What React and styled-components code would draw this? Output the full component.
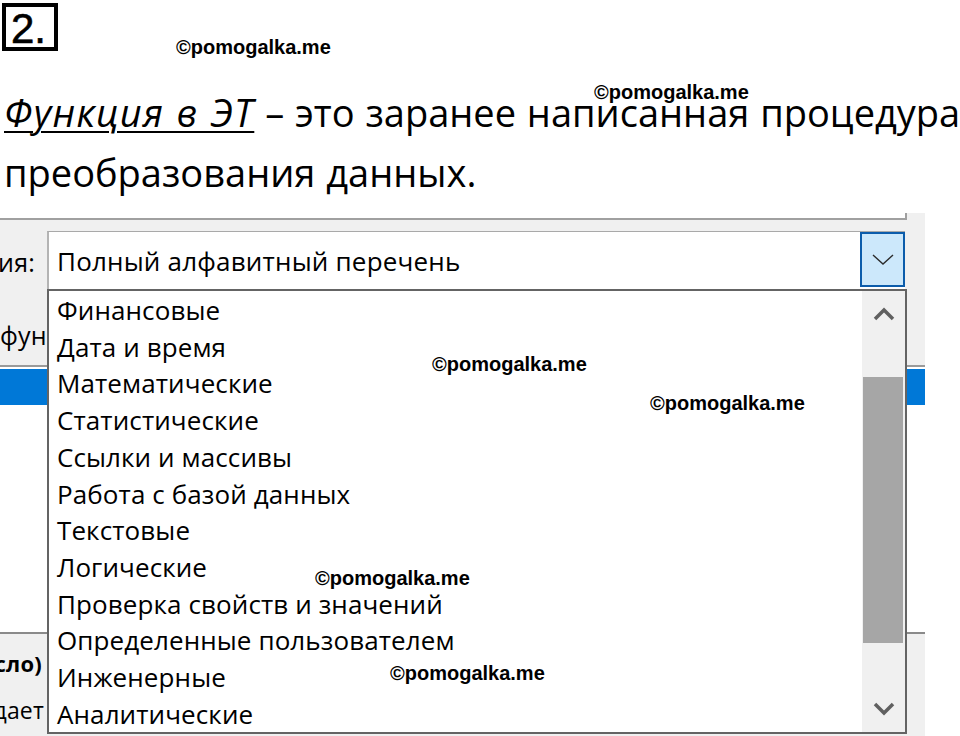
import styled, { createGlobalStyle } from "styled-components";

const GlobalStyle = createGlobalStyle`
  html, body {
    margin: 0;
    padding: 0;
    background: #fff;
  }
  body {
    overflow: hidden;
  }
`;

const Page = styled.div`
  position: relative;
  width: 960px;
  height: 736px;
  overflow: hidden;
  background: #fff;
`;

const TaskNumber = styled.div`
  margin: 3px 0 0 2px;
  width: 43px;
  height: 40px;
  padding-left: 5px;
  border: 4px solid #000;
  font-family: "Liberation Sans", Arial, sans-serif;
  font-size: 42px;
  line-height: 43px;
  color: #000;
  -webkit-text-stroke: 0.6px #000;
`;

const Definition = styled.p`
  margin: 31px 0 0 4px;
  font-family: "Open Sans", "Noto Sans", sans-serif;
  font-size: 38px;
  line-height: 60px;
  word-spacing: 1px;
  white-space: nowrap;
  color: #000;
`;

const Term = styled.span`
  font-style: italic;
  letter-spacing: 1.3px;
  text-decoration: underline;
  text-decoration-thickness: 2px;
  text-underline-offset: 4px;
`;

const Watermark = styled.div`
  position: absolute;
  left: ${(p) => p.$x}px;
  top: ${(p) => p.$y}px;
  font-family: "Liberation Sans", Arial, sans-serif;
  font-weight: bold;
  font-size: 20px;
  line-height: 20px;
  color: #000;
  white-space: nowrap;
  z-index: 5;
`;

/* окно "Мастер функций" на заднем плане */
const Dialog = styled.div`
  margin-top: 11px;
  width: 925px;
  background: #f0f0f0;
  font-family: "Open Sans", "Noto Sans", sans-serif;
  font-size: 26px;
  letter-spacing: 0.2px;
  color: #000;
`;

const TopEdge = styled.div`
  display: flex;
  height: 7px;
`;

const UpperCorner = styled.div`
  width: 907px;
  box-sizing: border-box;
  background: #fff;
  border-right: 2px solid #a0a0a0;
  border-bottom: 2px solid #a0a0a0;
`;

const CategoryArea = styled.div`
  display: grid;
  grid-template-columns: 47px 858px 20px;
  grid-template-rows: 58px 76px;
  padding-top: 11px;
`;

const SideLabel = styled.div`
  display: flex;
  justify-content: ${(p) => (p.$end ? "flex-end" : "flex-start")};
  padding: ${(p) => p.$pad};
  overflow: hidden;
  white-space: nowrap;
  line-height: ${(p) => p.$lh || 36}px;
  font-size: ${(p) => p.$size || 25}px;
  font-weight: ${(p) => (p.$bold ? 700 : 400)};
`;

const Combo = styled.div`
  display: flex;
  justify-content: space-between;
  background: #fff;
  border-top: 1px solid #a9a9a9;
  border-left: 2px solid #b4b4b4;
  box-sizing: border-box;
`;

const ComboText = styled.div`
  margin: 11px 0 0 8px;
  line-height: 36px;
  white-space: nowrap;
`;

const ComboButton = styled.div`
  width: 45px;
  height: 55px;
  box-sizing: border-box;
  border: 2px solid #0b5cab;
  background: #cce8fb;
  display: flex;
  align-items: center;
  justify-content: center;
`;

const ListBox = styled.div`
  height: 269px;
  box-sizing: border-box;
  background: #fff;
  border-top: 2px solid #9a9a9a;
  border-bottom: 2px solid #8a8a8a;
  padding-top: 2px;
`;

const SelectedRow = styled.div`
  height: 36px;
  background: #0078d7;
`;

const Description = styled.div`
  height: 110px;
  padding-top: 6px;
  box-sizing: border-box;
  width: 47px;
  display: flex;
  flex-direction: column;
`;

/* выпадающий список категорий */
const Dropdown = styled.div`
  position: absolute;
  left: 47px;
  top: 289px;
  width: 860px;
  height: 445px;
  box-sizing: border-box;
  border: 2px solid #646464;
  background: #fff;
  display: flex;
  font-family: "Open Sans", "Noto Sans", sans-serif;
  font-size: 26px;
  letter-spacing: 0.1px;
  color: #000;
  z-index: 2;
`;

const ItemList = styled.ul`
  flex: 1;
  margin: 0;
  padding: 1px 0 0 8px;
  list-style: none;
`;

const Item = styled.li`
  line-height: 36.7px;
  white-space: nowrap;
`;

const ScrollBar = styled.div`
  width: 43px;
  background: #f0f0f0;
  display: flex;
  flex-direction: column;
`;

const ArrowButton = styled.div`
  height: ${(p) => p.$h}px;
  display: flex;
  align-items: center;
  justify-content: center;
`;

const Spacer = styled.div`
  flex: 1;
`;

const Thumb = styled.div`
  height: 266px;
  margin: 41px 2px 0 1px;
  background: #a6a6a6;
`;

const categories = [
  "Финансовые",
  "Дата и время",
  "Математические",
  "Статистические",
  "Ссылки и массивы",
  "Работа с базой данных",
  "Текстовые",
  "Логические",
  "Проверка свойств и значений",
  "Определенные пользователем",
  "Инженерные",
  "Аналитические",
];

const marks = [
  [176, 37],
  [594, 82],
  [432, 354],
  [650, 393],
  [315, 568],
  [390, 663],
];

const Chevron = ({ up, thin }) =>
  thin ? (
    <svg width="22" height="12" viewBox="0 0 22 12">
      <polyline points="1,1 11,10 21,1" fill="none" stroke="#2b2b2b" strokeWidth="1.4" />
    </svg>
  ) : (
    <svg width="22" height="14" viewBox="0 0 22 14">
      <polyline
        points={up ? "2,12 11,3 20,12" : "2,2 11,11 20,2"}
        fill="none"
        stroke="#606060"
        strokeWidth="3.5"
      />
    </svg>
  );

const App = () => {
  return (
    <Page>
      <GlobalStyle />
      <TaskNumber>2.</TaskNumber>
      <Definition>
        <Term>Функция в ЭТ</Term> – это заранее написанная процедура
        <br />
        преобразования данных.
      </Definition>

      <Dialog>
        <TopEdge>
          <UpperCorner />
        </TopEdge>
        <CategoryArea>
          <SideLabel $end $pad="13px 12px 0 0">
            Категория:
          </SideLabel>
          <Combo>
            <ComboText>Полный алфавитный перечень</ComboText>
            <ComboButton>
              <Chevron thin />
            </ComboButton>
          </Combo>
          <div />
          <SideLabel $pad="28px 0 0 0">функцию:</SideLabel>
        </CategoryArea>
        <ListBox>
          <SelectedRow />
        </ListBox>
        <Description>
          <SideLabel $end $bold $size={22} $lh={47} $pad="0 5px 0 0">
            (число)
          </SideLabel>
          <SideLabel $end $size={23} $lh={47} $pad="0 3px 0 0">
            выдает
          </SideLabel>
        </Description>
      </Dialog>

      <Dropdown>
        <ItemList>
          {categories.map((c) => (
            <Item key={c}>{c}</Item>
          ))}
        </ItemList>
        <ScrollBar>
          <ArrowButton $h={45}>
            <Chevron up />
          </ArrowButton>
          <Thumb />
          <Spacer />
          <ArrowButton $h={46}>
            <Chevron />
          </ArrowButton>
        </ScrollBar>
      </Dropdown>

      {marks.map(([x, y], i) => (
        <Watermark key={i} $x={x} $y={y}>
          ©pomogalka.me
        </Watermark>
      ))}
    </Page>
  );
};

export default App;
